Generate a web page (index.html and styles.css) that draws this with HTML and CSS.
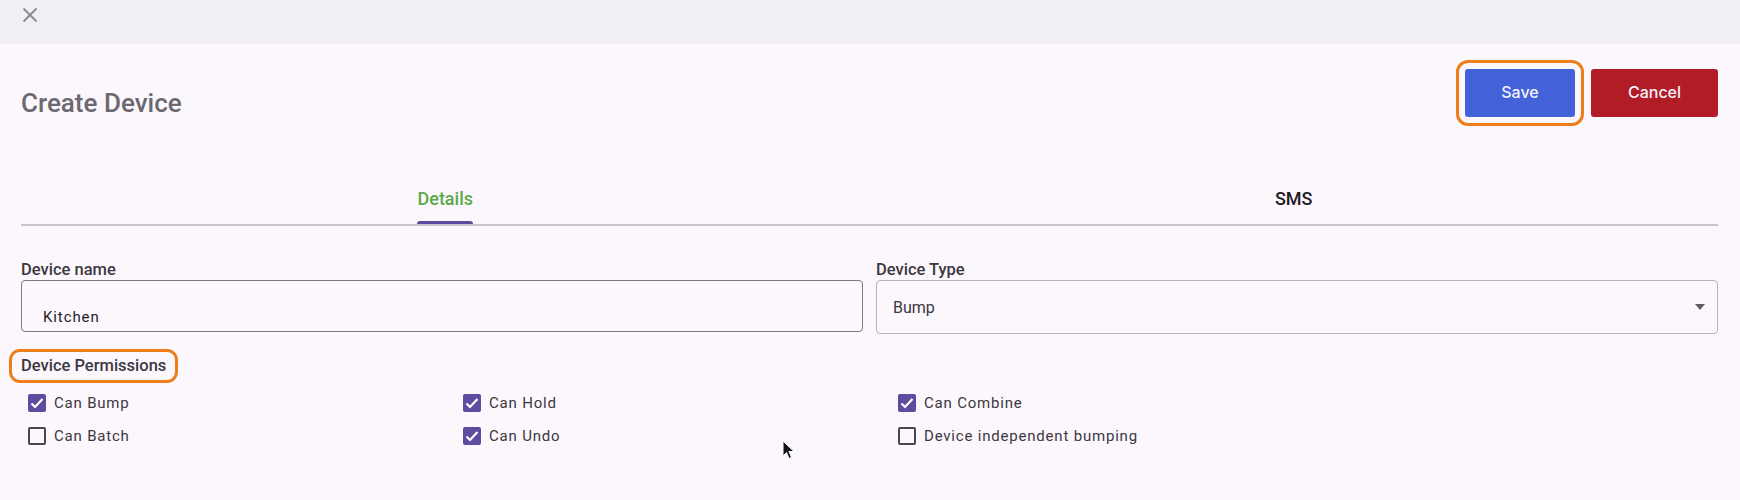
FILE: index.html
```html
<!DOCTYPE html>
<html lang="en">
<head>
    <meta charset="UTF-8">
    <title>Create Device</title>
    <link rel="stylesheet" href="styles.css">
</head>
<body>
    <div class="topbar">
        <button class="close-btn" aria-label="Close">
            <svg width="16" height="16" viewBox="0 0 16 16"><path d="M1.5 1.5 L14.5 14.5 M14.5 1.5 L1.5 14.5" stroke="#8a8790" stroke-width="1.8" fill="none"/></svg>
        </button>
    </div>

    <div class="content">
        <div class="header-row">
            <h1 class="title">Create Device</h1>
            <div class="actions">
                <button class="btn btn-save highlight-btn">Save</button>
                <button class="btn btn-cancel">Cancel</button>
            </div>
        </div>

        <div class="tabs">
            <div class="tab active">
                <div class="tab-inner">
                    <span class="tab-label">Details</span>
                    <div class="tab-indicator"></div>
                </div>
            </div>
            <div class="tab">
                <div class="tab-inner">
                    <span class="tab-label">SMS</span>
                </div>
            </div>
        </div>

        <div class="form-row">
            <div class="field">
                <label class="field-label">Device name</label>
                <div class="text-input">Kitchen</div>
            </div>
            <div class="field">
                <label class="field-label">Device Type</label>
                <div class="select-input">
                    <span>Bump</span>
                    <svg width="10" height="6" viewBox="0 0 10 6"><path d="M0 0 L10 0 L5 6 Z" fill="#5f5b63"/></svg>
                </div>
            </div>
        </div>

        <div class="permissions">
            <span class="section-label">Device Permissions</span>
            <div class="perm-grid">
                <div class="perm"><span class="box checked"></span>Can Bump</div>
                <div class="perm"><span class="box checked"></span>Can Hold</div>
                <div class="perm"><span class="box checked"></span>Can Combine</div>
                <div class="perm"><span class="box"></span>Can Batch</div>
                <div class="perm"><span class="box checked"></span>Can Undo</div>
                <div class="perm"><span class="box"></span>Device independent bumping</div>
            </div>
        </div>
    </div>

    <svg class="cursor" width="13" height="20" viewBox="0 0 13 20"><path d="M1 1 L1 16 L4.5 12.5 L7 18.5 L9.5 17.5 L7 11.5 L12 11.5 Z" fill="#111" stroke="#fff" stroke-width="1"/></svg>
</body>
</html>
```

FILE: styles.css
```css
body {
    margin: 0;
    background: #fbf7fd;
    font-family: Roboto, "Liberation Sans", sans-serif;
    color: #1f1b24;
    position: relative;
    height: 500px;
    overflow: hidden;
}

.topbar {
    height: 44px;
    background: #f1eff3;
    display: flex;
    align-items: center;
    padding-left: 22px;
}

.close-btn {
    background: none;
    border: none;
    padding: 0;
    margin-top: -14px;
    width: 16px;
    height: 16px;
    cursor: pointer;
}

.content {
    padding: 0 22px 0 21px;
}

.header-row {
    display: flex;
    justify-content: space-between;
    align-items: flex-start;
    padding-top: 25px;
}

.title {
    margin: 19px 0 0 0;
    font-size: 26px;
    line-height: 30px;
    font-weight: 500;
    color: #6c6870;
}

.actions {
    display: flex;
    gap: 16px;
}

.btn {
    height: 48px;
    border: none;
    border-radius: 3px;
    padding: 0 0 3px 0;
    color: #f3f2fa;
    font-family: Inter, "Liberation Sans", sans-serif;
    font-size: 16px;
    font-weight: 500;
    cursor: pointer;
}

.btn-save {
    width: 110px;
    background: #4361d8;
}

.btn-cancel {
    width: 127px;
    background: #b11c26;
}

.highlight-btn {
    outline: 3px solid #ef7d1a;
    outline-offset: 6px;
}

.tabs {
    display: flex;
    margin-top: 51px;
    border-bottom: 2px solid #c9c3cc;
}

.tab {
    flex: 1;
    display: flex;
    justify-content: center;
    height: 55px;
}

.tab-inner {
    display: flex;
    flex-direction: column;
    justify-content: flex-end;
    align-items: stretch;
}

.tab-label {
    font-size: 18px;
    line-height: 20px;
    font-weight: 500;
    color: #1f1b24;
    padding-bottom: 15px;
}

.tab.active .tab-label {
    color: #5ca94a;
    padding-bottom: 12px;
}

.tab-indicator {
    height: 3px;
    background: #5b4a9d;
    border-radius: 3px 3px 0 0;
}

.form-row {
    display: grid;
    grid-template-columns: 1fr 1fr;
    gap: 13px;
    margin-top: 36px;
}

.field {
    display: flex;
    flex-direction: column;
}

.field-label {
    font-size: 16.5px;
    line-height: 16px;
    font-weight: 500;
    color: #3c3842;
    margin-bottom: 2px;
}

.text-input {
    height: 52px;
    box-sizing: border-box;
    border: 1px solid #7d7882;
    border-radius: 4px;
    padding: 26px 0 0 21px;
    font-size: 15px;
    line-height: 20px;
    letter-spacing: 0.9px;
    color: #1f1b24;
}

.select-input {
    height: 54px;
    box-sizing: border-box;
    border: 1px solid #b9b3bd;
    border-radius: 4px;
    padding: 0 12px 0 16px;
    display: flex;
    align-items: center;
    justify-content: space-between;
    font-size: 16px;
    color: #3c3842;
}

.permissions {
    margin-top: 22px;
}

.section-label {
    display: inline-block;
    margin-left: -5px;
    padding: 2px 5px;
    border-radius: 4px;
    outline: 3px solid #ef7d1a;
    outline-offset: 4px;
    font-size: 16.5px;
    line-height: 16px;
    font-weight: 500;
    color: #3c3842;
}

.perm-grid {
    display: grid;
    grid-template-columns: 435px 435px 435px;
    margin-top: 10px;
}

.perm {
    height: 33px;
    display: flex;
    align-items: center;
    gap: 8px;
    padding-left: 7px;
    font-size: 15px;
    letter-spacing: 0.8px;
    color: #3c3842;
}

.box {
    width: 18px;
    height: 18px;
    box-sizing: border-box;
    border: 2px solid #4a4650;
    border-radius: 2px;
    flex-shrink: 0;
}

.box.checked {
    border: none;
    background: #5f4b9f url("data:image/svg+xml;utf8,<svg xmlns='http://www.w3.org/2000/svg' width='18' height='18' viewBox='0 0 18 18'><path d='M3.5 9.5 L7 13 L14.5 5' stroke='white' stroke-width='2.2' fill='none'/></svg>") no-repeat center;
}

.cursor {
    position: absolute;
    left: 782px;
    top: 440px;
}
```
